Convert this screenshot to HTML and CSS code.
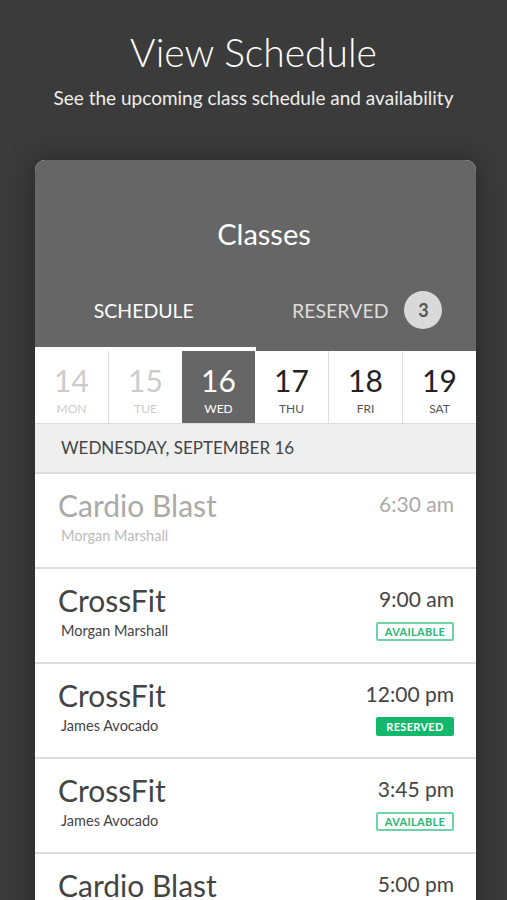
FILE: index.html
```html
<!DOCTYPE html>
<html>
<head>
    <title>View Schedule</title>
    <link rel="stylesheet" href="styles.css">
</head>
<body>
    <div class="hero">
        <h1 class="hero-title">View Schedule</h1>
        <p class="hero-sub">See the upcoming class schedule and availability</p>
    </div>
    <div class="card">
        <div class="card-head">
            <div class="card-title">Classes</div>
            <div class="tabs">
                <div class="tab tab-active">SCHEDULE</div>
                <div class="tab">RESERVED <span class="count">3</span></div>
            </div>
            <div class="tab-line"></div>
        </div>
        <div class="days">
            <div class="day day-past"><span class="day-num">14</span><span class="day-name">MON</span></div>
            <div class="day day-past"><span class="day-num">15</span><span class="day-name">TUE</span></div>
            <div class="day day-current"><span class="day-num">16</span><span class="day-name">WED</span></div>
            <div class="day"><span class="day-num">17</span><span class="day-name">THU</span></div>
            <div class="day"><span class="day-num">18</span><span class="day-name">FRI</span></div>
            <div class="day"><span class="day-num">19</span><span class="day-name">SAT</span></div>
        </div>
        <div class="date-head">WEDNESDAY, SEPTEMBER 16</div>
        <div class="class-row class-past">
            <div class="class-info">
                <div class="class-name">Cardio Blast</div>
                <div class="class-coach">Morgan Marshall</div>
            </div>
            <div class="class-side">
                <div class="class-time">6:30 am</div>
            </div>
        </div>
        <div class="class-row">
            <div class="class-info">
                <div class="class-name">CrossFit</div>
                <div class="class-coach">Morgan Marshall</div>
            </div>
            <div class="class-side">
                <div class="class-time">9:00 am</div>
                <div class="status">AVAILABLE</div>
            </div>
        </div>
        <div class="class-row">
            <div class="class-info">
                <div class="class-name">CrossFit</div>
                <div class="class-coach">James Avocado</div>
            </div>
            <div class="class-side">
                <div class="class-time">12:00 pm</div>
                <div class="status status-reserved">RESERVED</div>
            </div>
        </div>
        <div class="class-row">
            <div class="class-info">
                <div class="class-name">CrossFit</div>
                <div class="class-coach">James Avocado</div>
            </div>
            <div class="class-side">
                <div class="class-time">3:45 pm</div>
                <div class="status">AVAILABLE</div>
            </div>
        </div>
        <div class="class-row">
            <div class="class-info">
                <div class="class-name">Cardio Blast</div>
                <div class="class-coach">Morgan Marshall</div>
            </div>
            <div class="class-side">
                <div class="class-time">5:00 pm</div>
                <div class="status">AVAILABLE</div>
            </div>
        </div>
    </div>
</body>
</html>
```

FILE: styles.css
```css
body {
    margin: 0;
    font-family: Lato, "Open Sans", sans-serif;
    background-color: #3b3b3b;
    height: 900px;
    overflow: hidden;
}
.hero {
    text-align: center;
    color: #fff;
    padding-top: 28px;
}
.hero-title {
    margin: 0;
    font-size: 39px;
    font-weight: 300;
    line-height: 48px;
}
.hero-sub {
    margin: 10px 0 0;
    font-size: 19px;
    line-height: 24px;
    color: #eee;
}
.card {
    margin: 50px 31px 0 35px;
    background: #fff;
    border-radius: 10px 10px 0 0;
    overflow: hidden;
    box-shadow: 0 0 30px rgba(0, 0, 0, 0.35);
}
.card-head {
    background: #666;
    color: #fff;
}
.card-title {
    text-align: center;
    font-size: 29px;
    line-height: 36px;
    padding: 56px 0 0 17px;
}
.tabs {
    display: flex;
    margin-top: 35px;
    height: 60px;
}
.tab {
    flex: 1;
    display: flex;
    align-items: center;
    justify-content: center;
    font-size: 19.5px;
    color: #ddd;
    padding-bottom: 14px;
    box-sizing: border-box;
}
.tab-active {
    color: #fff;
    padding-right: 6px;
}
.count {
    display: inline-flex;
    align-items: center;
    justify-content: center;
    width: 38px;
    height: 38px;
    border-radius: 50%;
    background: #d9d9d9;
    color: #555;
    font-size: 18px;
    font-weight: 700;
    margin-left: 16px;
}
.tab-line {
    width: 50%;
    height: 4px;
    background: #fff;
}
.days {
    display: flex;
    height: 72px;
    border-bottom: 1px solid #ddd;
}
.day {
    flex: 1;
    display: flex;
    flex-direction: column;
    align-items: center;
    border-left: 1px solid #ddd;
    color: #222;
}
.day:first-child {
    border-left: none;
}
.day-num {
    font-size: 30px;
    line-height: 34px;
    margin-top: 12px;
}
.day-name {
    font-size: 12px;
    line-height: 16px;
    color: #555;
    margin-top: 4px;
}
.day-past .day-num,
.day-past .day-name {
    color: #ccc;
}
.day-current {
    background: #666;
    border-left: none;
}
.day-current .day-num,
.day-current .day-name {
    color: #fff;
}
.day-current + .day {
    border-left: none;
}
.date-head {
    background: #efefef;
    height: 48px;
    line-height: 48px;
    padding-left: 26px;
    font-size: 17px;
    color: #444;
    border-bottom: 2px solid #ddd;
}
.class-row {
    display: flex;
    justify-content: space-between;
    height: 78px;
    padding: 15px 22px 0 23px;
    border-bottom: 2px solid #dcdcdc;
}
.class-name {
    font-size: 30px;
    line-height: 32px;
    color: #444;
}
.class-coach {
    font-size: 14.5px;
    line-height: 18px;
    color: #444;
    margin: 6px 0 0 3px;
}
.class-side {
    display: flex;
    flex-direction: column;
    align-items: flex-end;
}
.class-time {
    font-size: 21px;
    line-height: 30px;
    color: #444;
}
.status {
    margin-top: 8px;
    width: 74px;
    height: 15px;
    line-height: 15px;
    border: 2px solid #6fd3a6;
    border-radius: 2px;
    text-align: center;
    font-size: 11px;
    font-weight: 700;
    letter-spacing: 0.3px;
    color: #2bb673;
}
.status-reserved {
    background: #14b86c;
    border-color: #14b86c;
    color: #fff;
}
.class-past .class-name,
.class-past .class-time {
    color: #aaa;
}
.class-past .class-coach {
    color: #bbb;
}
```
